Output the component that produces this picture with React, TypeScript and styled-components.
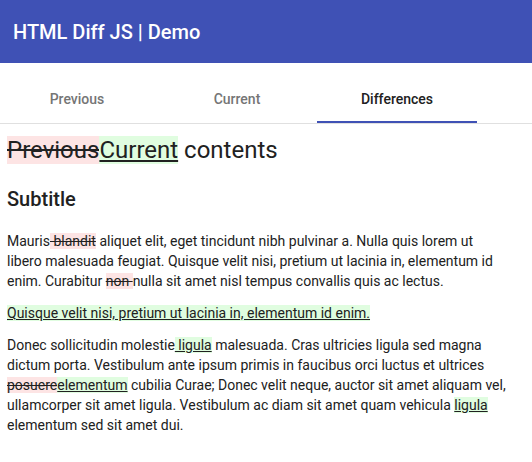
import styled, { createGlobalStyle } from 'styled-components';

const GlobalStyle = createGlobalStyle`
  body {
    margin: 0;
    background: #fff;
    font-family: Roboto, "Liberation Sans", sans-serif;
    color: #212121;
  }
`;

const tabs = [
  { label: 'Previous', active: false },
  { label: 'Current', active: false },
  { label: 'Differences', active: true },
];

const Page = styled.div`
  display: flex;
  flex-direction: column;
  min-height: 100vh;
`;

const AppBar = styled.header`
  display: flex;
  align-items: center;
  height: 63px;
  padding: 0 13px;
  background: #3f51b5;
  color: #fff;
`;

const Title = styled.h1`
  margin: 0;
  font-size: 20px;
  font-weight: 500;
`;

const TabBar = styled.nav`
  display: flex;
  padding-top: 12px;
  border-bottom: 1px solid #e0e0e0;
  margin-left: -3px;
`;

const Tab = styled.button<{ $active: boolean }>`
  position: relative;
  width: 160px;
  height: 48px;
  padding: 0;
  border: 0;
  background: none;
  font-family: inherit;
  font-size: 14px;
  font-weight: 500;
  color: ${(p) => (p.$active ? '#212121' : '#757575')};
  cursor: pointer;

  &::after {
    content: '';
    position: absolute;
    left: 0;
    right: 0;
    bottom: 0;
    height: 2px;
    background: ${(p) => (p.$active ? '#3f51b5' : 'transparent')};
  }
`;

const Content = styled.main`
  padding: 12px 25px 12px 7px;
`;

const Heading = styled.h1`
  margin: 0 0 23px;
  font-size: 24px;
  font-weight: 400;
`;

const Subtitle = styled.h2`
  margin: 0 0 20px;
  font-size: 20px;
  font-weight: 500;
`;

const Para = styled.p`
  margin: 0 0 12px;
  font-size: 14px;
  line-height: 20px;
`;

const Del = styled.del`
  background: #fde4e4;
  text-decoration: line-through;
`;

const Ins = styled.ins`
  background: #e0fde0;
  text-decoration: underline;
`;

export default function App() {
  return (
    <Page>
      <GlobalStyle />
      <AppBar>
        <Title>HTML Diff JS | Demo</Title>
      </AppBar>
      <TabBar>
        {tabs.map((t) => (
          <Tab key={t.label} $active={t.active}>
            {t.label}
          </Tab>
        ))}
      </TabBar>
      <Content>
        <Heading>
          <Del>Previous</Del>
          <Ins>Current</Ins> contents
        </Heading>
        <Subtitle>Subtitle</Subtitle>
        <Para>
          Mauris<Del> blandit</Del> aliquet elit, eget tincidunt nibh pulvinar a. Nulla quis
          lorem ut libero malesuada feugiat. Quisque velit nisi, pretium ut lacinia in,
          elementum id enim. Curabitur <Del>non </Del>nulla sit amet nisl tempus convallis
          quis ac lectus.
        </Para>
        <Para>
          <Ins>Quisque velit nisi, pretium ut lacinia in, elementum id enim.</Ins>
        </Para>
        <Para>
          Donec sollicitudin molestie<Ins> ligula</Ins> malesuada. Cras ultricies ligula sed
          magna dictum porta. Vestibulum ante ipsum primis in faucibus orci luctus et
          ultrices <Del>posuere</Del>
          <Ins>elementum</Ins> cubilia Curae; Donec velit neque, auctor sit amet aliquam vel,
          ullamcorper sit amet ligula. Vestibulum ac diam sit amet quam vehicula{' '}
          <Ins>ligula</Ins> elementum sed sit amet dui.
        </Para>
      </Content>
    </Page>
  );
}
